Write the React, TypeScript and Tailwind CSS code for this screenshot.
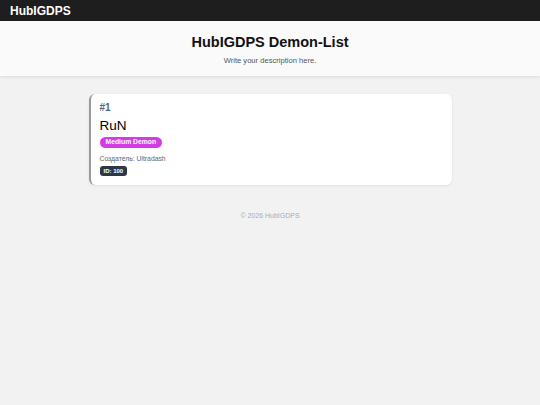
export default function App() {
  const f = { fontFamily: '"Liberation Sans", Arial, sans-serif' };
  return (
    <div className="min-h-[405px] bg-[#f2f2f2]" style={f}>
      <div className="h-[21px] bg-[#1e1e1e] flex items-center px-[10px]">
        <span className="text-white font-bold text-[12px] leading-none">HubIGDPS</span>
      </div>
      <div className="h-[55px] bg-[#fafafa] shadow-[0_1px_3px_rgba(0,0,0,0.1)] flex flex-col items-center pt-[13px]">
        <h1 className="text-[14.5px] font-bold text-[#111] leading-[17px]">HubIGDPS Demon-List</h1>
        <p className="text-[7.6px] text-[#555] mt-[5px] leading-[10px]">Write your description here.</p>
      </div>
      <div className="pt-[18px]">
        <div className="w-[363px] h-[91px] mx-auto bg-white rounded-[6px] border-l-[2px] border-[#9a9a9a] shadow-[0_1px_3px_rgba(0,0,0,0.08)] pl-[9px] pt-[8px]">
          <div className="text-[10px] font-bold text-[#5a6578] leading-[12px]">#1</div>
          <div className="text-[13.5px] text-black leading-[16px] mt-[4px]">RuN</div>
          <div className="mt-[3px] flex">
            <span className="bg-[#d43be6] text-white text-[6.8px] font-bold rounded-full px-[6px] h-[11px] flex items-center leading-none">Medium Demon</span>
          </div>
          <div className="text-[6.8px] text-[#666] mt-[6px] leading-[9px]">Создатель: Ultradash</div>
          <div className="mt-[3px] flex">
            <span className="bg-[#2d3748] text-white text-[6px] font-bold rounded-[3px] px-[4px] h-[10px] flex items-center leading-none">ID: 100</span>
          </div>
        </div>
      </div>
      <div className="text-center text-[7px] text-[#a0aec0] mt-[26px] leading-[9px]">© 2026 HubIGDPS</div>
    </div>
  );
}
